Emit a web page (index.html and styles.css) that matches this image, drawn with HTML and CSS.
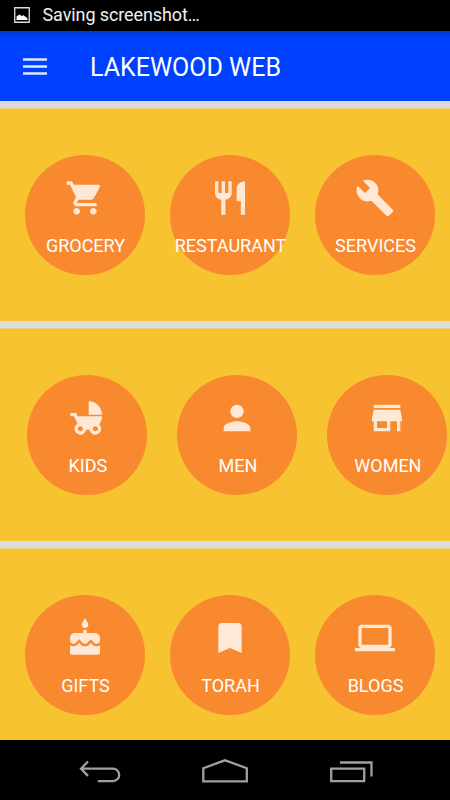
FILE: index.html
```html
<!DOCTYPE html>
<html lang="en">
<head>
<meta charset="utf-8">
<title>Lakewood Web</title>
<link rel="stylesheet" href="styles.css">
</head>
<body>
<div class="status">
  <svg class="status-icon" viewBox="0 0 16 16"><path d="M.75.75h14.5v14.5H.75z" fill="none" stroke="#ddd" stroke-width="1.3"/><path d="M2.500 13V9.500L5.500 7.500l2 1.500 2-.8 4 3V13z" fill="#fff"/></svg>
  <span class="status-text">Saving screenshot…</span>
</div>
<header class="appbar">
  <svg class="menu" viewBox="0 0 24 17"><path d="M0 1.500h24M0 8.500h24M0 15.500h24" stroke="#e0e8ff" stroke-width="2.500"/></svg>
  <h1 class="title">LAKEWOOD WEB</h1>
</header>
<main class="content">
  <section class="row">
    <a class="tile"><svg class="icon" viewBox="0 0 24 24"><path d="M7 18c-1.100 0-1.990.9-1.990 2S5.900 22 7 22s2-.9 2-2-.9-2-2-2zM1 2v2h2l3.600 7.590-1.350 2.450c-.16.28-.25.61-.25.960 0 1.100.9 2 2 2h12v-2H7.420c-.14 0-.25-.11-.25-.25l.03-.12.900-1.630h7.450c.75 0 1.410-.41 1.750-1.030l3.580-6.490c.08-.14.120-.31.120-.48 0-.55-.45-1-1-1H5.210l-.94-2H1zm16 16c-1.100 0-1.990.9-1.990 2s.89 2 1.990 2 2-.9 2-2-.9-2-2-2z"/></svg><span class="label">GROCERY</span></a>
    <a class="tile"><svg class="icon" viewBox="0 0 24 24"><path d="M11 9H9V2H7v7H5V2H3v7c0 2.120 1.660 3.840 3.750 3.970V22h2.500v-9.030C11.340 12.840 13 11.120 13 9V2h-2v7zm5-3v8h2.500v8H21V2c-2.760 0-5 2.240-5 4z"/></svg><span class="label">RESTAURANT</span></a>
    <a class="tile"><svg class="icon" viewBox="0 0 24 24"><path d="M22.700 19l-9.100-9.100c.9-2.300.4-5-1.500-6.900-2-2-5-2.400-7.400-1.300L9 6 6 9 1.600 4.700C.4 7.100.9 10.100 2.900 12.100c1.900 1.900 4.600 2.400 6.900 1.500l9.100 9.100c.4.4 1 .4 1.400 0l2.300-2.300c.5-.4.5-1.100.1-1.400z"/></svg><span class="label">SERVICES</span></a>
  </section>
  <section class="row row-wide">
    <a class="tile"><svg class="icon" viewBox="0 0 24 24"><path d="M13 2v8h8c0-4.420-3.580-8-8-8zm6.320 13.890C20.370 14.540 21 12.840 21 11H6.440l-.95-2H2v2h2.220s1.890 4.070 2.120 4.420c-1.100.59-1.840 1.750-1.840 3.080C4.500 20.430 6.070 22 8 22c1.760 0 3.220-1.300 3.460-3h2.080c.24 1.700 1.700 3 3.460 3 1.930 0 3.500-1.570 3.500-3.500 0-1.040-.46-1.970-1.180-2.610zM8 20c-.83 0-1.500-.67-1.500-1.500S7.170 17 8 17s1.500.67 1.500 1.500S8.830 20 8 20zm9 0c-.83 0-1.500-.67-1.500-1.500S16.170 17 17 17s1.500.67 1.500 1.500S17.830 20 17 20z"/></svg><span class="label">KIDS</span></a>
    <a class="tile"><svg class="icon" viewBox="0 0 24 24"><path d="M12 12c2.210 0 4-1.790 4-4s-1.790-4-4-4-4 1.790-4 4 1.790 4 4 4zm0 2c-2.670 0-8 1.340-8 4v2h16v-2c0-2.660-5.330-4-8-4z"/></svg><span class="label">MEN</span></a>
    <a class="tile"><svg class="icon" viewBox="0 0 24 24"><path d="M20 4H4v2h16V4zm1 10v-2l-1-5H4l-1 5v2h1v6h10v-6h4v6h2v-6h1zm-9 4H6v-4h6v4z"/></svg><span class="label">WOMEN</span></a>
  </section>
  <section class="row">
    <a class="tile"><svg class="icon" viewBox="0 0 24 24"><path d="M12 6c1.110 0 2-.9 2-2 0-.38-.1-.73-.29-1.030L12 0l-1.710 2.970c-.19.3-.29.65-.29 1.030 0 1.100.9 2 2 2zm4.600 9.990l-1.070-1.070-1.080 1.070c-1.300 1.300-3.580 1.310-4.890 0l-1.070-1.070-1.090 1.070C6.750 16.640 5.880 17 4.960 17c-.73 0-1.400-.23-1.960-.61V21c0 .55.45 1 1 1h16c.55 0 1-.45 1-1v-4.610c-.56.38-1.230.61-1.960.61-.92 0-1.790-.36-2.440-1.010zM18 9h-5V7h-2v2H6c-1.660 0-3 1.340-3 3v1.540c0 1.080.88 1.960 1.960 1.960.52 0 1.020-.2 1.380-.57l2.140-2.130 2.130 2.130c.74.74 2.030.74 2.770 0l2.140-2.130 2.130 2.130c.37.37.86.57 1.380.57 1.080 0 1.960-.88 1.960-1.960V12C21 10.340 19.660 9 18 9z"/></svg><span class="label">GIFTS</span></a>
    <a class="tile"><svg class="icon" viewBox="0 0 24 24"><path d="M17 3H7c-1.100 0-1.990.9-1.990 2L5 21l7-3 7 3V5c0-1.100-.9-2-2-2z"/></svg><span class="label">TORAH</span></a>
    <a class="tile"><svg class="icon" viewBox="0 0 24 24"><path d="M20 18c1.100 0 1.990-.9 1.990-2L22 6c0-1.100-.9-2-2-2H4c-1.100 0-2 .9-2 2v10c0 1.100.9 2 2 2H0v2h24v-2h-4zM4 6h16v10H4V6z"/></svg><span class="label">BLOGS</span></a>
  </section>
</main>
<nav class="navbar">
  <svg class="nav-icon" viewBox="0 0 46 26"><path d="M4.300 9.700H36a6 6 0 0 1 0 12.400H20.800M11 2.500L4 9.700l7 7.200"/></svg>
  <svg class="nav-icon" viewBox="0 0 46 26"><path d="M1.300 22.300V9.200L23 1.300l21.800 7.900v13.100z"/></svg>
  <svg class="nav-icon" viewBox="0 0 46 26"><path d="M4.200 9.700h33v12.500h-33zM13 3.500h31.500V17.500"/></svg>
</nav>
</body>
</html>
```
FILE: styles.css
```css
* {
  box-sizing: border-box;
}

body {
  margin: 0;
  height: 800px;
  display: flex;
  flex-direction: column;
  overflow: hidden;
  background: #000;
  color: #fff;
  font-family: Roboto, "Liberation Sans", sans-serif;
}

.status {
  flex: none;
  height: 31px;
  padding-left: 14px;
  display: flex;
  align-items: center;
  gap: 12.5px;
}

.status-icon {
  width: 16px;
  height: 16px;
  margin-top: -1px;
}

.status-text {
  font-size: 18px;
  line-height: 28px;
  margin-top: -2px;
  letter-spacing: -0.1px;
  color: #f0f0f0;
}

.appbar {
  flex: none;
  height: 70px;
  padding-left: 23px;
  display: flex;
  align-items: center;
  background: linear-gradient(#0038d8, #0040ff 8px);
}

.menu {
  width: 24px;
  height: 17px;
}

.title {
  margin: 0 0 0 43px;
  font-size: 25px;
  font-weight: 400;
  line-height: 66px;
  padding-top: 4px;
}

.content {
  flex: 1;
  min-height: 0;
  overflow: hidden;
  background: #f7c331;
}

.row {
  height: 220px;
  padding: 47px 0 0 25px;
  display: flex;
  gap: 25px;
  background: linear-gradient(#dcdcdc 7px, #ebce80 7px, #ebce80 8px, transparent 8px);
  padding-top: 54px;
}

.row-wide {
  padding-left: 27.4px;
  gap: 30px;
}

.tile {
  flex: none;
  width: 120px;
  height: 120px;
  padding-top: 22.5px;
  display: flex;
  flex-direction: column;
  align-items: center;
  border-radius: 50%;
  background: #f8892f;
}

.icon {
  width: 40px;
  height: 40px;
  fill: #ffe8d5;
}

.label {
  margin-top: 17px;
  padding-left: 1px;
  font-size: 18px;
  line-height: 22px;
  white-space: nowrap;
}

.navbar {
  flex: none;
  height: 60px;
  padding: 4px 77px 0;
  display: flex;
  align-items: center;
  justify-content: space-between;
}

.nav-icon {
  width: 46px;
  height: 26px;
  fill: none;
  stroke: #a0a0a0;
  stroke-width: 2.3;
}
```
